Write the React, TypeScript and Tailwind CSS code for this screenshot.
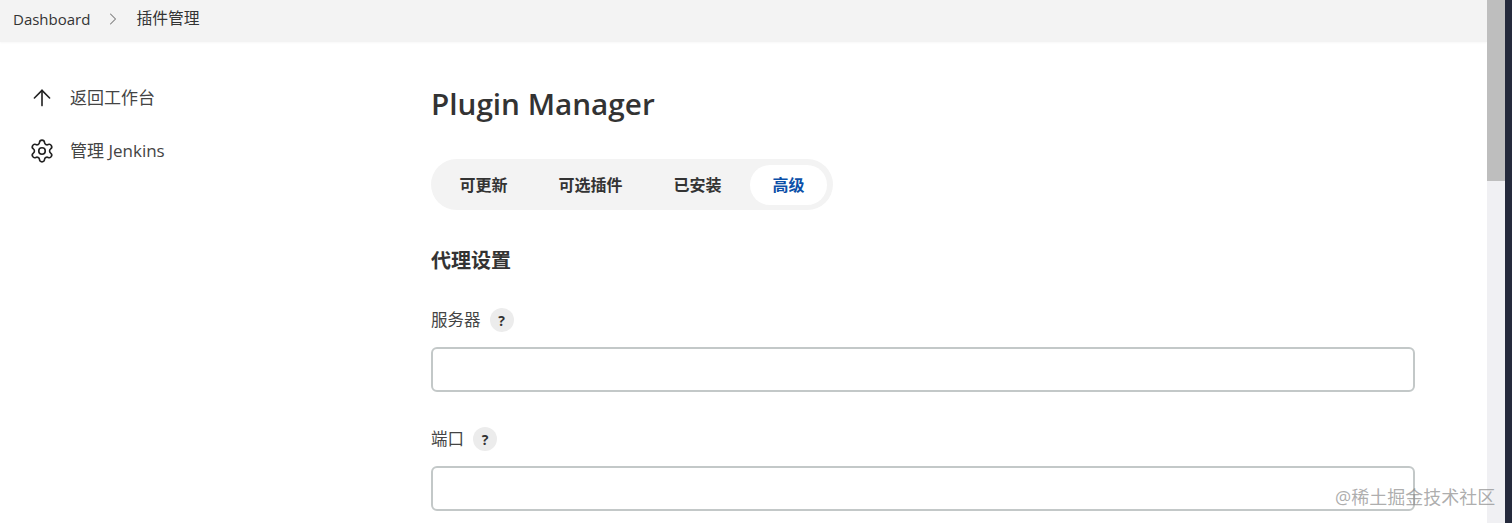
import { ArrowUp, ChevronRight, Settings } from "lucide-react";

const TABS = ["可更新", "可选插件", "已安装", "高级"];

function Field({ label }: { label: string }) {
  return (
    <div>
      <div className="flex h-[24px] items-center gap-[9px] text-[16.5px] text-[#444]">
        <span>{label}</span>
        <span className="flex h-[24px] w-[24px] items-center justify-center rounded-full bg-[#ececec] text-[14px] font-bold text-[#333]">
          ?
        </span>
      </div>
      <div className="mt-[15px] h-[45px] w-[984px] rounded-[6px] border-2 border-[#c3c8c8] bg-white" />
    </div>
  );
}

export default function App() {
  return (
    <div className="relative flex h-[523px] w-[1512px] overflow-hidden bg-white font-['Open_Sans','Noto_Sans_CJK_SC',sans-serif] text-[#333]">
      <div className="w-[1487px] shrink-0">
        <div className="flex h-[42px] items-center bg-[#f3f3f3] pb-[4px] pl-[13px] text-[15px] text-[#333] shadow-[0_1px_2px_rgba(0,0,0,0.03)]">
          <span>Dashboard</span>
          <ChevronRight className="ml-[13px] h-[20px] w-[20px] text-[#777]" strokeWidth={1.25} />
          <span className="ml-[13px] text-[15.8px]">插件管理</span>
        </div>

        <div className="flex">
          <nav className="w-[431px] shrink-0 pl-[29px] pt-[42px] text-[17px] text-[#444]">
            <div className="flex h-[53px] items-start">
              <ArrowUp className="mt-[1px] h-[26px] w-[26px] text-[#222]" strokeWidth={1.5} />
              <span className="ml-[15px] mt-[1px]">返回工作台</span>
            </div>
            <div className="flex h-[53px] items-start">
              <Settings className="mt-[1px] h-[26px] w-[26px] text-[#222]" strokeWidth={1.5} />
              <span className="ml-[15px] mt-[1px]">管理 Jenkins</span>
            </div>
          </nav>

          <main className="pt-[40px]">
            <h1 className="text-[29.7px] font-semibold leading-[44px] text-[#333]">Plugin Manager</h1>

            <div className="mt-[33px] flex h-[51px] w-[402px] items-center rounded-full bg-[#f3f3f3] pl-[3px] text-[16px] font-bold text-[#333]">
              {TABS.map((tab) => (
                <span
                  key={tab}
                  className={
                    tab === "高级"
                      ? "ml-[3px] flex h-[40px] w-[77px] items-center justify-center rounded-full bg-white text-[#0b4fa8]"
                      : "flex h-[40px] items-center justify-center px-[25.5px]"
                  }
                >
                  {tab}
                </span>
              ))}
            </div>

            <h2 className="mt-[36px] text-[20px] font-bold leading-[30px] text-[#333]">代理设置</h2>

            <div className="mt-[32px] flex flex-col gap-[35px]">
              <Field label="服务器" />
              <Field label="端口" />
            </div>
          </main>
        </div>
      </div>

      <div className="w-[18px] shrink-0 bg-[#f0f0f3]">
        <div className="h-[181px] bg-[#bebebe]" />
      </div>
      <div className="flex-1 bg-[#252a3c]" />

      <span className="absolute left-[1335px] top-[484px] text-[18px] text-[#8a8a8a]/70">@稀土掘金技术社区</span>
    </div>
  );
}
